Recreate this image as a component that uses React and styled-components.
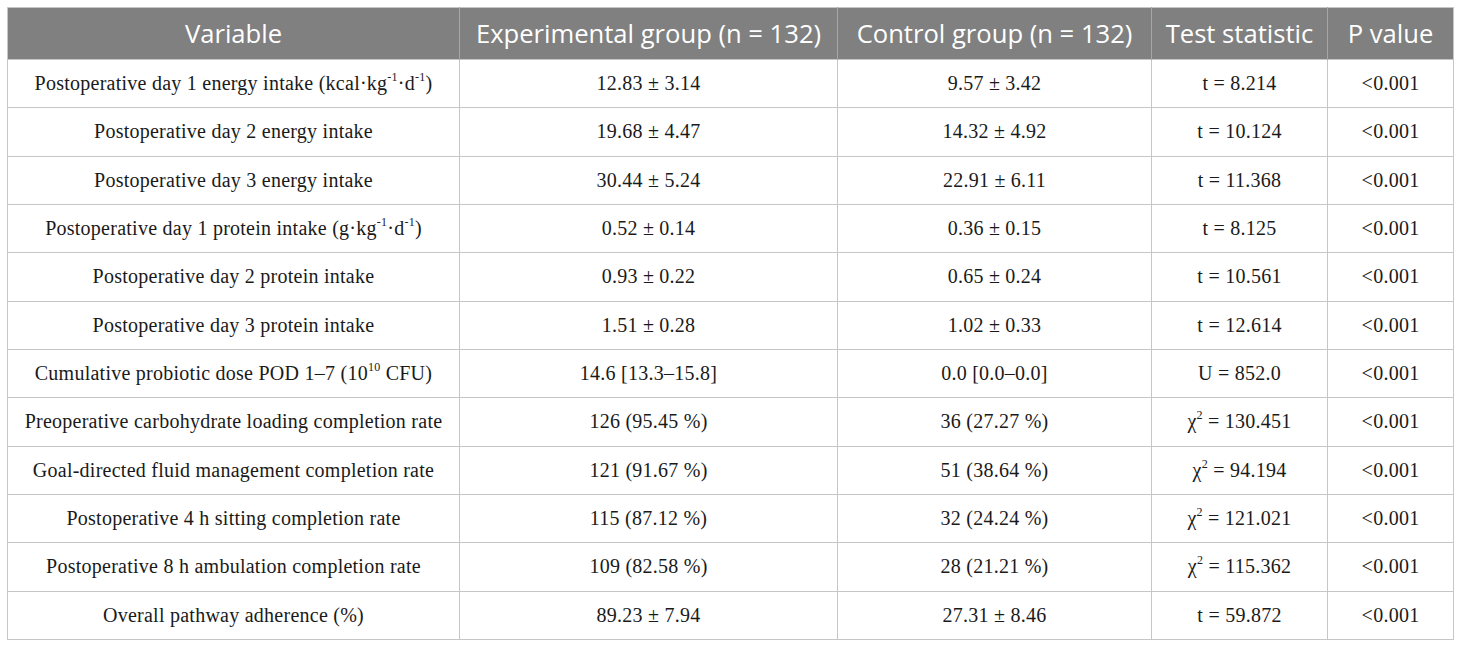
import React from "react";
import styled, { createGlobalStyle } from "styled-components";

const Global = createGlobalStyle`
  html, body { margin: 0; padding: 0; background: #ffffff; }
  #root { padding: 7px 7px 0 7px; }
`;

const Table = styled.table`
  width: 1446px;
  border-collapse: collapse;
  table-layout: fixed;
  border: 1px solid #c6c6c6;
`;

const Th = styled.th`
  height: 52px;
  padding: 0 4px;
  background: #7f807f;
  color: #ffffff;
  font-family: "Open Sans", "Noto Sans", sans-serif;
  font-weight: 400;
  font-size: 25.6px;
  text-align: center;
  white-space: nowrap;
  border-left: 1px solid #a6a6a6;
  &:first-child { border-left: none; }
  box-sizing: border-box;
`;

const Td = styled.td`
  height: 48.33px;
  padding: 0 4px;
  font-family: "Liberation Serif", "Times New Roman", serif;
  font-size: 20px;
  letter-spacing: 0.25px;
  color: #1a1a1a;
  text-align: center;
  white-space: nowrap;
  border: 1px solid #c6c6c6;
  box-sizing: border-box;
`;

const Sup = styled.sup`
  font-size: 12px;
  line-height: 0;
  vertical-align: 9px;
`;

const cols = [452, 378, 314, 176, 126];

const rows = [
  [<>Postoperative day 1 energy intake (kcal·kg<Sup>-1</Sup>·d<Sup>-1</Sup>)</>, "12.83 ± 3.14", "9.57 ± 3.42", "t = 8.214"],
  ["Postoperative day 2 energy intake", "19.68 ± 4.47", "14.32 ± 4.92", "t = 10.124"],
  ["Postoperative day 3 energy intake", "30.44 ± 5.24", "22.91 ± 6.11", "t = 11.368"],
  [<>Postoperative day 1 protein intake (g·kg<Sup>-1</Sup>·d<Sup>-1</Sup>)</>, "0.52 ± 0.14", "0.36 ± 0.15", "t = 8.125"],
  ["Postoperative day 2 protein intake", "0.93 ± 0.22", "0.65 ± 0.24", "t = 10.561"],
  ["Postoperative day 3 protein intake", "1.51 ± 0.28", "1.02 ± 0.33", "t = 12.614"],
  [<>Cumulative probiotic dose POD 1–7 (10<Sup>10</Sup> CFU)</>, "14.6 [13.3–15.8]", "0.0 [0.0–0.0]", "U = 852.0"],
  ["Preoperative carbohydrate loading completion rate", "126 (95.45 %)", "36 (27.27 %)", <>χ<Sup>2</Sup> = 130.451</>],
  ["Goal-directed fluid management completion rate", "121 (91.67 %)", "51 (38.64 %)", <>χ<Sup>2</Sup> = 94.194</>],
  ["Postoperative 4 h sitting completion rate", "115 (87.12 %)", "32 (24.24 %)", <>χ<Sup>2</Sup> = 121.021</>],
  ["Postoperative 8 h ambulation completion rate", "109 (82.58 %)", "28 (21.21 %)", <>χ<Sup>2</Sup> = 115.362</>],
  ["Overall pathway adherence (%)", "89.23 ± 7.94", "27.31 ± 8.46", "t = 59.872"],
];

export default function App() {
  return (
    <>
      <Global />
      <Table>
        <colgroup>
          {cols.map((w, i) => (
            <col key={i} style={{ width: w }} />
          ))}
        </colgroup>
        <thead>
          <tr>
            <Th>Variable</Th>
            <Th>Experimental group (n = 132)</Th>
            <Th>Control group (n = 132)</Th>
            <Th>Test statistic</Th>
            <Th>P value</Th>
          </tr>
        </thead>
        <tbody>
          {rows.map((r, i) => (
            <tr key={i}>
              <Td>{r[0]}</Td>
              <Td>{r[1]}</Td>
              <Td>{r[2]}</Td>
              <Td>{r[3]}</Td>
              <Td>&lt;0.001</Td>
            </tr>
          ))}
        </tbody>
      </Table>
    </>
  );
}
